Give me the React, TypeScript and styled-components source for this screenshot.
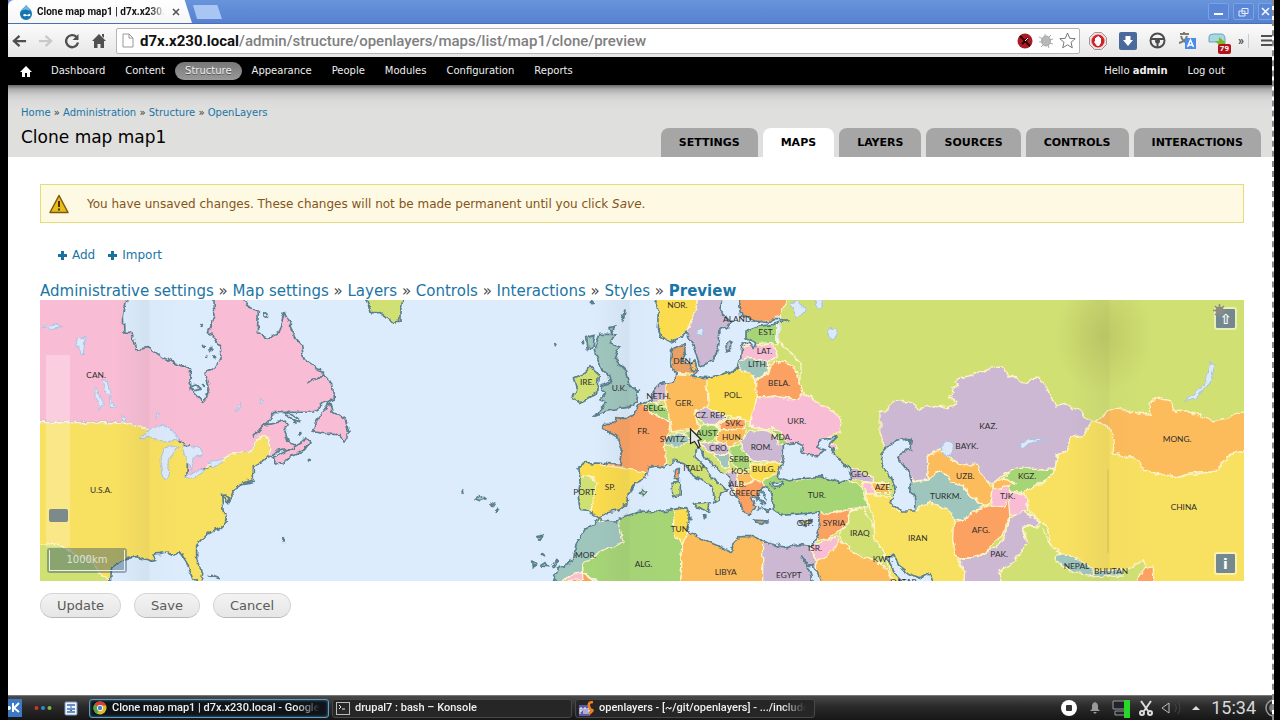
import React from "react";
import styled, { createGlobalStyle } from "styled-components";

const GlobalStyle = createGlobalStyle`
  * { box-sizing: border-box; }
  body { margin: 0; background: #000; font-family: "DejaVu Sans", sans-serif; }
  a { color: #1b75a6; text-decoration: none; }
  button, input { font-family: inherit; }
`;

const Screen = styled.div`
  min-height: 100vh;
  margin: 0 6px 0 8px;
  display: flex;
  flex-direction: column;
  background: #fff;
  border-right: 2px dashed #8a8a8a;
`;

/* Browser window */
const TitleBar = styled.header`
  height: 24px;
  display: flex;
  align-items: flex-end;
  background: linear-gradient(#6794da, #5681d1);
  border-bottom: 1px solid #4a70b4;
`;
const BrowserTab = styled.div`
  width: 184px;
  height: 23px;
  display: flex;
  align-items: center;
  gap: 3px;
  padding: 0 8px 0 10px;
  background: linear-gradient(#fff, #f6f6f6);
  border-radius: 6px 0 0 0;
  clip-path: polygon(0 0, 96% 0, 100% 100%, 0 100%);
`;
const TabTitle = styled.span`
  flex: 1;
  overflow: hidden;
  white-space: nowrap;
  font: 700 10px/16px Roboto, sans-serif;
  color: #111;
  mask-image: linear-gradient(to right, #000 88%, transparent);
`;
const CloseTab = styled.button`
  border: 0;
  padding: 0;
  width: 16px;
  height: 16px;
  background: none;
  color: #555;
  display: grid;
  place-items: center;
`;
const NewTab = styled.button`
  width: 29px;
  height: 14px;
  margin: 0 0 4px 1px;
  padding: 0;
  border: 0;
  background: #a9c5f3;
  clip-path: polygon(0 0, 84% 0, 100% 100%, 14% 100%);
`;
const WindowButtons = styled.div`
  margin-left: auto;
  align-self: center;
  display: flex;
  gap: 4px;
`;
const WindowButton = styled.button`
  width: 21px;
  height: 17px;
  padding: 0;
  display: grid;
  place-items: center;
  border: 1px solid #7ca2e4;
  border-radius: 2px;
  background: #5a86d6;
  &:last-child { width: 14px; border-right: 0; }
`;
const ToolBar = styled.div`
  height: 33px;
  display: flex;
  align-items: center;
  background: linear-gradient(#fbfbfb, #e6e6e6);
`;
const NavTools = styled.div`
  display: flex;
  align-items: center;
  gap: 11px;
  padding: 0 9px 0 4px;
`;
const BarTools = styled.div`
  display: flex;
  align-items: center;
  gap: 5px;
`;
const Extensions = styled.div`
  display: flex;
  align-items: center;
  gap: 12px;
  padding-left: 9px;
`;
const IconButton = styled.button`
  border: 0;
  padding: 0;
  background: none;
  display: grid;
  place-items: center;
  position: relative;
`;
const AddressBar = styled.div`
  flex: 1;
  height: 26px;
  display: flex;
  align-items: center;
  padding: 0 3px 0 5px;
  background: #fff;
  border: 1px solid #b4b4b4;
  border-radius: 2px;
  font: 700 15px/20px Roboto, sans-serif;
`;
const Host = styled.label`
  margin-left: 6px;
  color: #111;
`;
const PathInput = styled.input`
  flex: 1;
  min-width: 0;
  border: 0;
  padding: 0;
  outline: 0;
  background: none;
  color: #808080;
  font: 500 15px/20px Roboto, sans-serif;
`;
const CountBadge = styled.span`
  position: absolute;
  right: -5px;
  bottom: -4px;
  padding: 0 2px;
  background: #b3141c;
  border-radius: 2px;
  color: #fff;
  font: 700 8px/10px Roboto, sans-serif;
`;
const More = styled.span`
  font: 700 12px/14px Roboto, sans-serif;
  color: #444;
  padding-right: 4px;
  border-right: 1px solid #ccc;
`;

/* Drupal admin */
const AdminNav = styled.nav`
  height: 28px;
  display: flex;
  align-items: center;
  padding: 0 47px 0 12px;
  background: #000;
  font-size: 10px;
  line-height: 18px;
  color: #eee;
`;
const NavLink = styled.a<{ $active?: boolean }>`
  padding: 0 10px;
  color: #eee;
  border-radius: 9px;
  background: ${(p) => (p.$active ? "linear-gradient(#777, #999)" : "none")};
  text-shadow: ${(p) => (p.$active ? "0 1px 0 #555" : "none")};
`;
const HomeLink = styled.a`
  display: grid;
  width: 12px;
  margin-right: 9px;
`;
const UserArea = styled.div`
  margin-left: auto;
  display: flex;
  gap: 20px;
`;
const PlainLink = styled.a`
  color: #eee;
`;
const PageHeader = styled.div`
  display: flex;
  justify-content: space-between;
  align-items: flex-end;
  padding: 0 11px 0 13px;
  background: linear-gradient(#6a6868, #aaa 4px, #cdcdcc 10px, #dadada 16px, #dfdfde 24px);
`;
const Heading = styled.div`
  padding: 20px 0 9px;
`;
const Crumbs = styled.nav`
  font-size: 10px;
  line-height: 16px;
  color: #333;
`;
const Title = styled.h1`
  margin: 5px 0 0;
  font-size: 17px;
  line-height: 22px;
  font-weight: 400;
  color: #000;
`;
const Tabs = styled.nav`
  display: flex;
  gap: 5px;
`;
const Tab = styled.a<{ $active?: boolean }>`
  padding: 0 18px;
  font-size: 11px;
  line-height: 29px;
  font-weight: 700;
  color: #000;
  border-radius: 8px 8px 0 0;
  background: ${(p) => (p.$active ? "#fff" : "#a6a6a6")};
`;
const Main = styled.main`
  flex: 1;
  padding: 27px 28px 20px 32px;
`;
const Warning = styled.div`
  display: flex;
  align-items: center;
  gap: 18px;
  height: 39px;
  padding: 0 8px;
  border: 1px solid #e4dc7c;
  background: #fdf9e3;
  color: #84541b;
  font-size: 12px;
  line-height: 16px;
`;
const Actions = styled.div`
  display: flex;
  gap: 13px;
  margin: 24px 0 19px 18px;
  font-size: 12px;
  line-height: 16px;
`;
const ActionLink = styled.a`
  display: flex;
  align-items: center;
  gap: 5px;
`;
const Steps = styled.nav`
  font-size: 15px;
  line-height: 18px;
  color: #444;
`;
const MapView = styled.section`
  position: relative;
  height: 281px;
  overflow: hidden;
  background: #dcecfc;
`;
const MapDrawing = styled.svg`
  display: block;
  width: 100%;
  height: 100%;
`;
const ZoomSlider = styled.input`
  position: absolute;
  left: 6px;
  top: 55px;
  width: 24px;
  height: 192px;
  margin: 0;
  appearance: none;
  writing-mode: vertical-lr;
  background: rgba(255, 255, 255, 0.25);
  &::-webkit-slider-thumb {
    appearance: none;
    width: 19px;
    height: 13px;
    border-radius: 2px;
    background: #7c8a8c;
  }
`;
const ScaleLine = styled.div`
  position: absolute;
  left: 7px;
  bottom: 8px;
  padding: 2px;
  border-radius: 3px;
  background: rgba(40, 80, 110, 0.42);
`;
const ScaleInner = styled.div`
  width: 76px;
  height: 21px;
  border: 1px solid #eee;
  border-top: 0;
  color: #dfe3d4;
  font-size: 10px;
  line-height: 20px;
  text-align: center;
`;
const MapButton = styled.button<{ $bottom?: boolean }>`
  position: absolute;
  right: 7px;
  ${(p) => (p.$bottom ? "bottom: 6px;" : "top: 7px;")}
  width: 23px;
  height: 23px;
  padding: 0;
  border: 2px solid rgba(255, 255, 255, 0.5);
  border-radius: 3px;
  background: #748890;
  background-clip: padding-box;
  color: #fff;
  font: 700 14px/18px "DejaVu Sans", sans-serif;
`;
const MapGear = styled.svg`
  position: absolute;
  right: 18px;
  top: 4px;
`;
const Pointer = styled.svg`
  position: absolute;
  left: 649px;
  top: 128px;
`;
const FormButtons = styled.div`
  display: flex;
  gap: 13px;
  margin-top: 12px;
`;
const PillButton = styled.button`
  height: 25px;
  padding: 0 16px;
  border: 1px solid #d4d4d4;
  border-bottom-color: #b8b8b8;
  border-radius: 13px;
  background: linear-gradient(#f3f3f3, #e6e6e6);
  color: #5a5a5a;
  font-size: 13px;
  line-height: 20px;
`;

/* Desktop panel */
const Panel = styled.footer`
  height: 25px;
  display: flex;
  align-items: center;
  border-top: 1px solid #777;
  background: linear-gradient(#4a4a4a, #2c2c2c 40%, #161616);
  color: #e8e8e8;
`;
const Launchers = styled.div`
  display: flex;
  align-items: center;
  gap: 12px;
  width: 81px;
`;
const TaskButton = styled.button<{ $active?: boolean }>`
  flex: 0 1 240px;
  min-width: 0;
  height: 19px;
  margin-right: 3px;
  display: flex;
  align-items: center;
  gap: 5px;
  padding: 0 8px 0 3px;
  border: 1px solid ${(p) => (p.$active ? "#5b9fc8" : "#484848")};
  border-radius: 3px;
  background: ${(p) => (p.$active ? "#101418" : "#262626")};
  box-shadow: ${(p) => (p.$active ? "inset 0 0 3px #3f84ac" : "none")};
  color: #f0f0f0;
  text-align: left;
`;
const TaskTitle = styled.span`
  flex: 1;
  overflow: hidden;
  white-space: nowrap;
  font: 500 11px/16px Roboto, sans-serif;
  mask-image: linear-gradient(to right, #000 88%, transparent);
`;
const Tray = styled.div`
  margin-left: auto;
  display: flex;
  align-items: center;
  gap: 8px;
`;
const Clock = styled.time`
  font: 400 18px/22px Roboto, sans-serif;
  color: #d8d8d8;
`;

const navItems = ["Dashboard", "Content", "Structure", "Appearance", "People", "Modules", "Configuration", "Reports"];
const tabs = ["SETTINGS", "MAPS", "LAYERS", "SOURCES", "CONTROLS", "INTERACTIONS"];
const crumbs = ["Home", "Administration", "Structure", "OpenLayers"];
const steps = ["Administrative settings", "Map settings", "Layers", "Controls", "Interactions", "Styles", "Preview"];

const C = {
  sea: "#dcecfc", coast: "#5a7f8e", border: "#fff3c8",
  lime: "#d0e073", green: "#a6d576", yellow: "#f8e060", gold: "#fbdc4e",
  orange: "#fdbc5c", deep: "#fba263", purple: "#ccb8d2", pink: "#f8bdd4", teal: "#9fc6bd",
};

type Shape = [string, string];

/* Asia, drawn in its own frame starting at x = 2460 */
const asia: Shape[] = [
  [C.purple, "60,350 80,342 85,325 110,315 135,318 150,315 180,338 215,328 240,335 285,328 290,318 270,305 282,290 278,275 295,268 282,255 295,248 370,228 395,215 430,213 445,230 443,243 465,240 485,260 505,262 515,250 535,243 560,275 580,315 587,330 610,322 640,335 660,340 672,360 695,372 680,395 670,418 630,425 622,465 592,475 585,520 500,517 440,528 400,560 360,550 300,505 240,462 202,478 205,552 160,555 80,470 60,410"],
  [C.yellow, "700,372 745,395 762,432 760,470 840,490 850,520 950,545 1060,525 1080,515 1095,480 1152,465 1200,460 1200,880 860,880 800,850 700,840 600,780 575,755 560,690 510,650 500,600 490,590 550,560 585,522 592,475 622,465 630,425 670,418"],
  [C.orange, "710,375 735,350 780,335 810,348 872,355 870,320 885,305 935,315 940,345 1000,350 1060,375 1110,365 1130,350 1200,345 1200,462 1152,465 1110,475 1100,490 1080,500 1075,522 1000,530 950,545 850,522 840,495 760,470 762,432 745,395"],
  [C.lime, "430,890 420,830 500,740 490,690 540,690 575,750 620,790 700,830 800,822 850,790 880,890"],
  [C.yellow, "15,590 50,600 90,600 110,645 170,642 210,615 250,630 280,650 285,680 278,730 290,785 312,830 300,890 100,890 80,790 40,720 40,660 20,620"],
  [C.teal, "150,560 175,555 205,552 225,530 245,525 268,545 280,560 310,570 335,605 372,630 345,640 310,675 285,668 260,640 210,618 170,642 150,600"],
  [C.orange, "202,478 240,462 270,490 300,505 355,508 365,540 385,560 400,575 395,610 380,632 335,605 310,570 270,560 262,538 240,525 225,530 205,552"],
  [C.green, "440,535 460,520 500,515 585,522 560,550 520,570 490,590 455,585 440,575 462,562 430,548"],
  [C.orange, "400,560 430,548 462,562 440,575 400,578"],
  [C.pink, "400,580 440,572 455,588 490,595 500,610 503,640 470,655 450,650 440,625 390,635"],
  [C.deep, "280,680 310,675 340,645 390,632 430,628 445,612 450,660 425,720 400,740 380,770 340,785 290,785 278,730"],
  [C.purple, "297,788 350,785 380,770 425,740 450,665 490,645 540,678 520,690 488,690 500,740 460,800 420,825 430,890 300,890 315,830"],
  [C.teal, "590,778 615,772 660,795 700,820 700,840 640,830 588,797"],
  [C.teal, "705,825 790,822 790,840 705,842"],
  [C.deep, "830,855 850,820 880,812 882,890 830,890"],
];

/* Europe and North Africa, drawn in a frame starting at x = 1800 */
const europe: Shape[] = [
  [C.lime, "-250,300 100,250 330,140 410,130 480,200 480,620 -20,620 -250,580"],
  [C.green, "-80,640 100,640 105,700 125,750 118,890 -60,890 -172,830 -172,800 -90,755 -50,740"],
  [C.teal, "-300,890 -240,640 -110,640 -65,670 -50,740 -90,755 -172,800 -172,830 -250,860"],
  [C.pink, "-230,855 -210,835 -172,830 -172,890 -240,890"],
  [C.deep, "-230,855 -172,850 -172,832 -90,890 -240,890"],
  [C.gold, "-210,480 -60,510 25,530 20,560 -30,640 -110,680 -150,665 -145,600 -135,545 -210,545"],
  [C.lime, "-210,545 -150,542 -132,560 -140,610 -148,650 -210,660"],
  [C.deep, "-130,350 -10,325 20,325 50,358 90,378 88,400 75,440 80,500 60,530 20,530 -60,515 -130,505"],
  [C.gold, "40,-10 172,-10 160,70 140,105 90,145 30,120"],
  [C.purple, "172,-10 250,-10 285,70 240,210 170,215 140,110 160,70"],
  [C.deep, "300,-10 450,-10 425,50 400,75 330,80 295,60"],
  [C.green, "310,80 410,80 410,140 345,142 310,130"],
  [C.pink, "295,155 345,140 365,150 395,138 413,180 390,195 340,185 300,190"],
  [C.teal, "300,190 340,185 385,195 385,225 350,250 320,235 300,225"],
  [C.deep, "350,255 385,228 388,208 410,195 460,205 470,240 490,290 468,312 400,300 350,305"],
  [C.gold, "190,250 290,215 345,245 352,300 345,330 330,375 280,365 250,355 205,335 200,280"],
  [C.orange, "75,270 100,235 200,245 205,335 165,355 180,400 95,405 90,375 78,340"],
  ["#e9a062", "85,150 150,140 180,235 100,228"],
  [C.purple, "30,270 78,258 78,310 50,320 20,325"],
  [C.green, "10,330 40,315 85,340 88,375 50,358"],
  [C.teal, "75,425 110,410 147,415 150,440 100,452 75,445"],
  [C.green, "130,412 175,402 190,385 237,390 232,425 200,438 145,430"],
  [C.purple, "165,350 200,332 260,362 235,385 190,385"],
  [C.deep, "240,380 280,368 320,375 312,398 240,402"],
  [C.orange, "235,405 318,397 310,430 265,450 232,430"],
  [C.pink, "350,308 400,300 465,312 485,298 510,295 525,320 560,330 605,370 600,405 560,425 590,460 500,490 420,455 410,400 380,402 330,390 332,370"],
  [C.purple, "305,440 330,405 370,402 395,410 420,445 445,460 420,500 340,495 310,470"],
  [C.green, "395,395 420,405 442,440 420,448"],
  [C.purple, "180,440 260,440 265,472 225,475 200,465"],
  [C.teal, "220,475 270,475 268,520 245,510"],
  [C.green, "270,450 300,450 330,490 330,520 290,518 275,490"],
  [C.gold, "332,505 430,500 415,540 345,560 325,530"],
  [C.orange, "290,535 325,530 340,555 300,565"],
  [C.purple, "255,530 290,525 298,590 260,590"],
  [C.deep, "285,575 350,555 400,552 400,600 370,680 300,670"],
  [C.green, "370,545 420,535 450,555 540,540 620,550 665,570 682,635 600,645 540,660 380,670"],
  [C.purple, "610,515 650,520 700,545 695,560 640,550"],
  [C.pink, "668,560 700,560 710,595 680,590"],
  [C.orange, "690,560 745,560 750,590 710,590"],
  [C.gold, "98,630 160,630 150,715 125,750 98,700"],
  [C.orange, "118,890 125,750 150,690 370,700 368,890"],
  [C.purple, "368,700 500,740 530,750 540,890 368,890"],
  [C.orange, "525,890 530,795 560,770 600,728 650,775 720,800 790,890"],
  [C.pink, "510,750 545,740 590,722 592,745 550,790 525,795"],
  [C.deep, "530,650 580,652 630,640 625,680 565,728 530,735"],
  [C.lime, "630,645 672,637 700,690 700,720 740,790 720,800 650,775 600,728 600,700 628,680"],
];

const europeSea: string[] = [
  "-270,890 -245,815 -200,795 -192,745 -165,700 -135,685 -125,665 -150,645 -180,640 -185,600 -180,560 -183,515 -160,500 -60,505 -50,460 -65,425 -115,395 -105,382 -75,382 -72,365 -40,368 -15,355 -8,330 30,315 45,280 60,265 100,258 108,235 92,200 95,160 135,142 138,170 128,190 140,205 165,200 172,225 150,240 200,245 225,240 265,230 295,215 302,180 305,150 325,138 345,160 350,140 318,125 318,105 350,92 400,85 445,72 395,70 385,80 345,75 305,60 295,-10 245,-10 243,50 275,80 258,95 240,100 236,150 218,195 178,210 168,170 150,130 142,105 120,125 90,138 65,125 52,95 55,50 42,-10 -2000,-10 -2000,890",
  "-125,662 -105,648 -65,642 -40,622 -35,595 -10,560 18,545 25,515 50,510 75,515 105,490 130,500 150,530 185,555 215,570 222,600 218,622 235,612 240,590 262,582 245,565 215,545 192,510 165,482 165,462 180,458 195,485 235,520 268,545 278,590 300,615 308,645 332,655 345,630 330,605 355,600 368,570 385,575 395,600 400,640 425,658 500,652 538,648 540,680 530,720 515,752 480,745 440,755 385,742 345,722 300,722 278,745 275,768 240,752 200,735 150,712 140,690 148,655 140,635 100,640 50,648 0,645 -50,662 -75,678 -115,675",
  "430,445 470,440 490,450 485,470 515,480 535,478 555,460 530,450 550,430 592,422 565,450 590,480 630,520 635,545 600,560 540,542 490,545 450,555 415,545 420,515 430,485",
  "400,560 425,560 430,568 408,572",
  "485,780 510,812 520,800 522,815 530,825 555,890 525,890 508,825",
  "770,435 810,428 815,460 785,465 775,490 800,520 815,555 812,590 827,600 827,645 790,645 750,620 768,590 755,545 725,510 720,475 738,455",
  "738,780 765,778 775,810 810,835 840,845 870,830 885,890 820,890 770,840",
];

const islands: Shape[] = [
  [C.teal, "-120,115 -75,115 -90,140 -60,150 -75,190 -40,225 -30,270 -5,282 -10,320 -40,335 -95,342 -135,358 -100,320 -120,310 -105,290 -120,270 -85,260 -90,240 -110,230 -130,180 -135,150"],
  [C.lime, "-150,212 -125,235 -130,290 -180,320 -202,308 -190,280 -200,245 -175,235"],
  [C.teal, "-160,125 -135,118 -140,145 -155,165"],
  [C.teal, "-90,95 -72,90 -85,112"],
  [C.teal, "-55,60 -45,42 -50,75"],
  [C.deep, "103,525 118,520 115,552 104,545"],
  [C.lime, "97,560 118,555 118,600 98,602"],
  [C.lime, "160,622 210,618 205,648 170,635"],
  [C.deep, "340,672 388,675 365,685"],
  [C.orange, "475,675 515,670 495,692"],
  [C.purple, "255,150 270,135 275,150 258,168"],
  [C.lime, "0,590 12,578 20,588 8,598"],
  [C.lime, "-825,-10 -810,50 -780,50 -740,80 -720,75 -720,45 -705,-10"],
  [C.orange, "150,205 165,195 170,220 155,225"],
  [C.teal, "345,600 355,610 348,615"], [C.teal, "365,615 378,620 370,628"], [C.teal, "372,640 392,638 384,652"], [C.teal, "355,630 362,640 352,642"],
  [C.teal, "-535,590 -530,580 -528,592"], [C.teal, "-495,608 -480,598 -465,608 -480,614"], [C.teal, "-450,622 -435,628 -445,632"], [C.teal, "-310,722 -290,718 -300,730"],
  [C.teal, "-322,795 -312,800 -320,818"], [C.teal, "-300,810 -285,800 -278,812"], [C.teal, "-265,812 -250,790 -248,800 -258,815"],
];

const america: Shape[] = [
  [C.pink, "-20,-10 265,-10 250,60 252,108 275,110 290,160 325,155 370,185 420,208 452,217 450,255 455,285 470,300 488,320 500,300 508,275 495,228 525,215 540,190 538,150 515,118 505,110 525,60 520,-10 600,-10 630,35 655,45 652,110 685,125 715,110 733,50 770,130 785,145 790,185 830,218 850,225 850,240 878,265 880,310 850,322 820,348 700,350 690,370 640,420 670,388 735,375 742,385 733,400 745,440 785,452 745,460 715,465 695,480 500,560 -20,500"],
  [C.pink, "868,320 878,350 895,355 920,375 930,410 915,435 890,412 845,412 818,405 828,375"],
  [C.pink, "700,485 745,462 785,440 795,425 810,440 795,460 750,480 725,505 708,500"],
  [C.yellow, "-20,380 250,380 330,402 405,430 445,450 440,545 500,515 550,492 575,475 635,467 650,430 668,418 683,425 692,478 640,512 640,550 590,570 575,600 562,620 545,595 550,650 562,675 540,695 500,715 470,745 470,790 488,830 482,870 460,850 440,800 420,770 395,778 385,768 340,775 350,790 330,795 290,782 250,790 215,815 208,890 -20,890"],
];
const lakes = [
  "300,425 345,388 390,392 415,435 380,440 345,425", "365,540 360,490 375,455 415,450 388,490 385,540 375,548",
  "425,450 480,455 490,478 460,480 455,520 440,500", "435,545 460,528 500,520 480,535 450,550", "500,502 545,490 550,500 520,512",
  "185,250 205,255 215,305 195,290", "110,125 135,125 130,180 115,160", "0,100 35,85 70,92 30,98", "165,270 190,320 180,340 165,300", "210,305 230,335 215,338",
  "585,345 605,318 600,335", "240,360 260,370 250,380", "660,310 675,315 665,328", "345,348 358,352 350,370",
  "2252,25 2268,15 2300,40 2270,70", "2325,12 2345,12 2350,30 2335,42", "2362,100 2385,95 2392,120 2375,132",
  "1968,100 1985,92 1988,115 1970,120", "2942,460 2946,442 2970,430 3030,432 2975,440 2950,455", "3435,312 3490,270 3510,200 3525,205 3510,260 3465,310",
  "2700,450 2720,435 2740,440 2738,475 2715,485",
];
const specks = [[490, 150], [513, 158], [524, 182], [500, 180], [490, 268], [780, 415], [808, 496], [731, 733], [515, 838], [485, 85], [1628, 140], [1548, 146], [1510, 776], [1657, 20], [1370, 643], [1950, 665], [1995, 662]];

const labels: [string, number, number][] = [
  ["CAN.", 139, 246], ["U.S.A.", 150, 590], ["IRE.", 1620, 267], ["U.K.", 1715, 284], ["NETH.", 1819, 308], ["BELG.", 1809, 345],
  ["FR.", 1792, 414], ["SP.", 1694, 581], ["PORT.", 1600, 596], ["MOR.", 1605, 787], ["ALG.", 1784, 814], ["NOR.", 1882, 37],
  ["ALAND.", 2049, 77], ["EST.", 2155, 118], ["LAT.", 2150, 174], ["LITH.", 2124, 213], ["DEN.", 1900, 205], ["BELA.", 2184, 270],
  ["POL.", 2052, 306], ["GER.", 1906, 331], ["CZ. REP.", 1966, 367], ["SVK.", 2056, 390], ["UKR.", 2242, 385], ["AUST.", 1968, 421],
  ["HUN.", 2046, 433], ["MDA.", 2192, 433], ["SWITZ.", 1859, 438], ["CRO.", 2008, 464], ["ROM.", 2132, 463], ["SERB.", 2068, 497],
  ["ITALY", 1930, 526], ["KOS.", 2074, 533], ["BULG.", 2136, 529], ["ALB.", 2066, 574], ["GREECE", 2068, 601], ["TUR.", 2303, 607],
  ["GEO.", 2432, 543], ["TUN.", 1892, 708], ["CYP.", 2270, 690], ["SYRIA", 2348, 690], ["IRAQ", 2430, 720], ["ISR.", 2304, 765],
  ["LIBYA", 2024, 837], ["EGYPT", 2208, 846], ["KAZ.", 2818, 400], ["BAYK.", 2746, 459], ["UZB.", 2748, 550], ["KGZ.", 2934, 549],
  ["AZE.", 2504, 582], ["TURKM.", 2670, 609], ["TJK.", 2880, 609], ["IRAN", 2604, 735], ["AFG.", 2795, 711], ["PAK.", 2851, 782],
  ["KWT.", 2498, 797], ["QATAR", 2550, 866], ["NEPAL", 3071, 820], ["BHUTAN", 3162, 835], ["MONG.", 3368, 438], ["CHINA", 3392, 641],
];

const PoliticalMap = () => (
  <MapDrawing viewBox="0 12 3612 843" preserveAspectRatio="xMinYMin slice" role="img" aria-label="World map preview">
    <defs>
      <filter id="rough" x="0" y="0" width="3612" height="880" filterUnits="userSpaceOnUse" colorInterpolationFilters="sRGB">
        <feTurbulence type="fractalNoise" baseFrequency="0.045" numOctaves="3" seed="4" />
        <feDisplacementMap in="SourceGraphic" scale="18" xChannelSelector="R" yChannelSelector="G" />
      </filter>
      <linearGradient id="fold">
        <stop offset="0" stopColor="#555" stopOpacity="0" />
        <stop offset=".5" stopColor="#555" stopOpacity=".07" />
        <stop offset=".53" stopColor="#555" stopOpacity=".02" />
        <stop offset="1" stopColor="#555" stopOpacity="0" />
      </linearGradient>
      <radialGradient id="stain">
        <stop offset="0" stopColor="#807a30" stopOpacity=".2" />
        <stop offset="1" stopColor="#807a30" stopOpacity="0" />
      </radialGradient>
    </defs>
    <g filter="url(#rough)" strokeLinejoin="round">
      <path d="M2230 -10H3700V890H2330V620L2180 560Z" fill={C.lime} />
      <g stroke={C.border} strokeWidth="4">
        <g transform="translate(2460 0)">{asia.map(([f, p]) => <polygon key={p} points={p} fill={f} />)}</g>
        <g transform="translate(1800 0)">{europe.map(([f, p]) => <polygon key={p} points={p} fill={f} />)}</g>
      </g>
      <g stroke={C.coast} strokeWidth="5">
        <g transform="translate(1800 0)">
          {europeSea.map((p) => <polygon key={p} points={p} fill={C.sea} />)}
          {islands.map(([f, p]) => <polygon key={p} points={p} fill={f} />)}
        </g>
        {america.map(([f, p]) => <polygon key={p} points={p} fill={f} />)}
        {specks.map(([x, y]) => <circle key={`${x}-${y}`} cx={x} cy={y} r="3" fill={C.coast} />)}
        <path d="M805 262Q830 240 855 242M735 350Q770 358 782 378Q745 372 735 350M455 272Q475 260 480 280Q460 290 455 272M672 50Q684 50 682 66Q670 70 672 50M545 600Q570 590 560 620M500 835L540 845M645 555L590 568" fill="none" />
      </g>
      <polygon points="-20,750 40,745 80,755 110,780 150,790 175,830 208,850 208,890 -20,890" fill={C.lime} stroke={C.border} strokeWidth="4" />
      <path d="M-20 380H250L330 402L400 425M500 512L550 492L575 475L635 467L650 430L668 418L683 425L692 475" fill="none" stroke={C.border} strokeWidth="6" />
      <g fill="#dbe9fa" stroke="#a9c4e4" strokeWidth="3">{lakes.map((p) => <polygon key={p} points={p} />)}</g>
      <path d="M2190 560l15 20M2160 580l20 30M2150 600l10 20M2165 635l25 15" stroke={C.coast} strokeWidth="4" />
    </g>
    <rect x="225" y="0" width="200" height="870" fill="url(#fold)" />
    <rect x="1665" y="0" width="200" height="870" fill="url(#fold)" />
    <rect x="3085" y="0" width="240" height="870" fill="url(#fold)" />
    <ellipse cx="3190" cy="120" rx="150" ry="170" fill="url(#stain)" />
    <path d="M3204 520V770" stroke="#a89a48" strokeWidth="2" opacity=".6" />
    <g fontFamily="Lato, sans-serif" fontSize="25" fill="#2e2e2e">
      {labels.map(([t, x, y]) => <text key={t} x={x} y={y}>{t}</text>)}
    </g>
  </MapDrawing>
);

const Arrow = ({ flip, color }: { flip?: boolean; color: string }) => (
  <svg width="15" height="14" viewBox="0 0 16 14" fill="none" stroke={color} strokeWidth="2.4">
    <path d={flip ? "M1 7h12M8 1.500l6 5.500-6 5.500" : "M15 7H3M8 1.500L2 7l6 5.500"} />
  </svg>
);

const joined = (items: string[], last?: string) =>
  items.map((t, i) => (
    <React.Fragment key={t}>
      {i > 0 && " » "}
      <a href="#">{t === last ? <b>{t}</b> : t}</a>
    </React.Fragment>
  ));

export default function App() {
  return (
    <Screen>
      <GlobalStyle />
      <TitleBar>
        <BrowserTab>
          <svg width="16" height="16" viewBox="0 0 16 16">
            <path d="M8 1C9 3 14 5 14 10a6 6 0 0 1-12 0C2 5 7 4 8 1Z" fill="#1477b4" />
            <path d="M3 7C4 5 8 3 8 1c1 2 4 4 4 6-3-2-6-2-9 0Z" fill="#6fb9e4" />
            <path d="M5 11c2-2 3 0 4 0s2-2 3-1 0 3-2 2-3 2-5-1Z" fill="#fff" />
          </svg>
          <TabTitle>Clone map map1 | d7x.x230.local</TabTitle>
          <CloseTab aria-label="Close tab">
            <svg width="8" height="8" viewBox="0 0 8 8" stroke="currentColor" strokeWidth="1.600"><path d="M1 1l6 6M7 1L1 7" /></svg>
          </CloseTab>
        </BrowserTab>
        <NewTab aria-label="New tab" />
        <WindowButtons>
          <WindowButton aria-label="Minimize"><svg width="11" height="10"><path d="M1 7h9" stroke="#fff" strokeWidth="2" /></svg></WindowButton>
          <WindowButton aria-label="Restore"><svg width="11" height="10" fill="none" stroke="#e4eeff"><path d="M4 1.500h6v5H4zM1 4h6v5H1z" /></svg></WindowButton>
          <WindowButton aria-label="Close window"><svg width="9" height="9" stroke="#fff" strokeWidth="1.500"><path d="M1 1l7 7M8 1L1 8" /></svg></WindowButton>
        </WindowButtons>
      </TitleBar>
      <ToolBar>
        <NavTools>
          <IconButton aria-label="Back"><Arrow color="#4e4e4e" /></IconButton>
          <IconButton aria-label="Forward"><Arrow flip color="#c9c9c9" /></IconButton>
          <IconButton aria-label="Reload">
            <svg width="16" height="16" viewBox="0 0 16 16" fill="none" stroke="#505050" strokeWidth="2.400"><path d="M12.500 4A6 6 0 1 0 14 9.500" /><path d="M14.500 1v6H8.500z" fill="#505050" stroke="none" /></svg>
          </IconButton>
          <IconButton aria-label="Home">
            <svg width="16" height="16" viewBox="0 0 16 16" fill="#505050"><path d="M8 1l7 7h-2v7H9.500v-4h-3v4H3V8H1zM11 1h2v4l-2-2z" /></svg>
          </IconButton>
        </NavTools>
        <AddressBar>
          <svg width="12" height="15" viewBox="0 0 12 15" fill="#fff" stroke="#999"><path d="M1 1h6l4 4v9H1zM7 1v4h4" /></svg>
          <Host htmlFor="address">d7x.x230.local</Host>
          <PathInput id="address" defaultValue="/admin/structure/openlayers/maps/list/map1/clone/preview" />
          <BarTools>
            <svg width="16" height="16" viewBox="0 0 16 16"><circle cx="8" cy="8" r="7.500" fill="#a81c26" /><path d="M3 3l10 10M11 5L5 11" stroke="#300" strokeWidth="2" /><path d="M11 5l-3 3" stroke="#fff" /></svg>
            <svg width="16" height="16" viewBox="0 0 16 16" stroke="#aaa"><ellipse cx="8" cy="8" rx="4.500" ry="5" fill="#b8b8b8" /><path d="M1 4l4 2M1 9h4M3 14l3-3M13 2l-3 3M15 6l-4 1M15 11l-4-1M11 15l-1-4M7 1v3" /></svg>
            <svg width="17" height="17" viewBox="0 0 17 17" fill="#fff" stroke="#777"><path d="M8.500 1l2.200 5.300 5.500.4-4.200 3.600 1.300 5.500-4.800-3-4.800 3L5 10.300.8 6.700l5.500-.4z" /></svg>
          </BarTools>
        </AddressBar>
        <Extensions>
          <IconButton aria-label="Ad blocker">
            <svg width="18" height="18" viewBox="0 0 18 18"><path d="M5.500.5h7l5 5v7l-5 5h-7l-5-5v-7z" fill="#f4dada" stroke="#999" /><circle cx="9" cy="9" r="6.500" fill="#cf2228" /><path d="M6 9V6h1.200V5h1.300V4h1.300v1H11v1h1v5l-2 3H8L5 10z" fill="#fff" /></svg>
          </IconButton>
          <IconButton aria-label="Downloads">
            <svg width="18" height="18" viewBox="0 0 18 18"><rect width="18" height="18" rx="2" fill="#4b6a9c" /><path d="M6.500 4h5v4H14l-5 6-5-6h2.500z" fill="#fff" /></svg>
          </IconButton>
          <IconButton aria-label="Steering">
            <svg width="17" height="17" viewBox="0 0 17 17" fill="none" stroke="#4c4c4c" strokeWidth="2"><circle cx="8.500" cy="8.500" r="7" /><path d="M2 7h13M8.500 9v6" /><circle cx="8.500" cy="9" r="1.500" fill="#444" /></svg>
          </IconButton>
          <IconButton aria-label="Translate">
            <svg width="18" height="18" viewBox="0 0 18 18"><path d="M2 2h9M6 0v3M3 4c1 4 4 6 6 7M9 4C8 8 5 10 1 11" stroke="#7c7c6c" strokeWidth="2" fill="none" /><rect x="7" y="6" width="11" height="11" fill="#4a8ce8" /><path d="M9.500 15l3-7 3 7M10.500 13h4" stroke="#fff" strokeWidth="1.500" fill="none" /></svg>
          </IconButton>
          <IconButton aria-label="Extension, 79 items">
            <svg width="18" height="18" viewBox="0 0 18 18"><path d="M1 9V5q0-3 4-3h8q4 0 4 5v3H1z" fill="#a8d6e4" stroke="#6aa6b8" /><path d="M7 9h4V5l7 6-5 4z" fill="#79b928" /></svg>
            <CountBadge>79</CountBadge>
          </IconButton>
          <More>»</More>
          <IconButton aria-label="Menu"><svg width="11" height="13"><path d="M0 2h11M0 6.500h11M0 11h11" stroke="#505050" strokeWidth="2" /></svg></IconButton>
        </Extensions>
      </ToolBar>
      <AdminNav>
        <HomeLink href="#" aria-label="Home"><svg width="12" height="11" viewBox="0 0 12 11" fill="#fff"><path d="M6 0l6 6h-2v5H7V7H5v4H2V6H0z" /></svg></HomeLink>
        {navItems.map((t) => <NavLink key={t} href="#" $active={t === "Structure"}>{t}</NavLink>)}
        <UserArea>
          <span>Hello <b>admin</b></span>
          <PlainLink href="#">Log out</PlainLink>
        </UserArea>
      </AdminNav>
      <PageHeader>
        <Heading>
          <Crumbs>{joined(crumbs)}</Crumbs>
          <Title>Clone map map1</Title>
        </Heading>
        <Tabs>{tabs.map((t) => <Tab key={t} href="#" $active={t === "MAPS"}>{t}</Tab>)}</Tabs>
      </PageHeader>
      <Main>
        <Warning>
          <svg width="20" height="20" viewBox="0 0 20 20"><path d="M10 1.500L19 18.500H1z" fill="#e8bd17" stroke="#7a5a10" strokeWidth="1.500" strokeLinejoin="round" /><path d="M10 7v6M10 14.500v2" stroke="#4a3000" strokeWidth="2" /></svg>
          <span>You have unsaved changes. These changes will not be made permanent until you click <i>Save</i>.</span>
        </Warning>
        <Actions>
          {["Add", "Import"].map((t) => (
            <ActionLink key={t} href="#">
              <svg width="9" height="9"><path d="M4.500 0v9M0 4.500h9" stroke="#1a719f" strokeWidth="3" /></svg>{t}
            </ActionLink>
          ))}
        </Actions>
        <Steps>{joined(steps, "Preview")}</Steps>
        <MapView>
          <PoliticalMap />
          <ZoomSlider type="range" aria-label="Zoom" min={0} max={100} defaultValue={86} />
          <ScaleLine><ScaleInner>1000km</ScaleInner></ScaleLine>
          <MapButton aria-label="Full screen">⇧</MapButton>
          <MapGear width="13" height="13" viewBox="0 0 13 13"><circle cx="6.500" cy="6.500" r="4" fill="#8c8c84" /><path d="M6.500 0v13M0 6.500h13M2 2l9 9M11 2l-9 9" stroke="#8c8c84" strokeWidth="1.500" /></MapGear>
          <MapButton $bottom aria-label="Attribution">i</MapButton>
          <Pointer width="14" height="21" viewBox="0 0 14 21"><path d="M1.500 1v14.500l4-2 4 6 1.500-1-2-6 3-1z" fill="#e8e8e8" stroke="#222" strokeWidth="1.200" /></Pointer>
        </MapView>
        <FormButtons>
          <PillButton>Update</PillButton>
          <PillButton>Save</PillButton>
          <PillButton>Cancel</PillButton>
        </FormButtons>
      </Main>
      <Panel>
        <Launchers>
          <svg width="14" height="18" viewBox="0 0 14 18"><rect width="14" height="18" fill="#3c78c4" /><path d="M5 4v9M11 4L6 9l5 4" stroke="#fff" strokeWidth="2" fill="none" /><circle cx="1" cy="9" r="2" fill="#fff" /></svg>
          <svg width="18" height="6"><circle cx="2.500" cy="3" r="2" fill="#c33" /><circle cx="9" cy="3" r="2" fill="#38c" /><circle cx="15.500" cy="3" r="2" fill="#7b4" /></svg>
          <svg width="14" height="15" viewBox="0 0 14 15"><rect x="1" y="1" width="12" height="13" rx="1" fill="#eef3fa" stroke="#7c98c0" /><path d="M3 4h8M3 8h8M3 11h8" stroke="#3c6cb0" strokeWidth="1.500" /><path d="M6 6h2M6 9.500h2" stroke="#3c6cb0" /></svg>
        </Launchers>
        <TaskButton $active>
          <svg width="14" height="14" viewBox="0 0 14 14"><circle cx="7" cy="7" r="6.500" fill="#e0b92c" /><path d="M7 7L1.400 3.800A6.500 6.500 0 0 1 13 4.500H7z" fill="#d8412f" /><path d="M7 7L4 13A6.500 6.500 0 0 1 1.400 3.800z" fill="#4ca64c" /><circle cx="7" cy="7" r="3" fill="#fff" /><circle cx="7" cy="7" r="2.200" fill="#4a80d0" /></svg>
          <TaskTitle>Clone map map1 | d7x.x230.local - Google Chrome</TaskTitle>
        </TaskButton>
        <TaskButton>
          <svg width="14" height="13" viewBox="0 0 14 13"><rect x=".5" y=".5" width="13" height="12" fill="#282828" stroke="#bbb" /><path d="M3 3l2 2-2 2M6 7h3" stroke="#eee" fill="none" /></svg>
          <TaskTitle>drupal7 : bash – Konsole</TaskTitle>
        </TaskButton>
        <TaskButton>
          <svg width="15" height="15" viewBox="0 0 15 15"><rect y="4" width="11" height="11" fill="#5a5aa8" /><path d="M1 13V7h2v3H1M5 13V7h2v6M9 13V7h2v3H9" stroke="#fff" fill="none" /><path d="M14 1Q9 1 10 5t3 4-3 4" stroke="#f08020" strokeWidth="2.500" fill="none" /></svg>
          <TaskTitle>openlayers - [~/git/openlayers] - .../includes/</TaskTitle>
        </TaskButton>
        <Tray>
          <svg width="18" height="18" viewBox="0 0 18 18"><circle cx="9" cy="9" r="8" fill="#fff" /><rect x="6" y="6" width="6" height="6" fill="#333" rx="1" /></svg>
          <svg width="18" height="14" viewBox="0 0 18 14" fill="#999"><path d="M4 10l2-2V5q0-3 3-4 3 1 3 4v3l2 2zM7 11h4l-2 2z" /></svg>
          <svg width="19" height="19" viewBox="0 0 19 19"><path d="M1 2h14v8H1zM3 12h10v4H3z" fill="#20242c" stroke="#999" /><rect x="12" y="1" width="6" height="18" fill="#28d828" /></svg>
          <svg width="14" height="16" viewBox="0 0 14 16" fill="none" stroke="#ddd" strokeWidth="2"><path d="M2 1l7 10M12 1L5 11" /><circle cx="3" cy="13" r="2" /><circle cx="11" cy="13" r="2" /></svg>
          <svg width="20" height="14" viewBox="0 0 20 14" fill="none" stroke="#bbb"><path d="M1 7l7-5v10z" /><path d="M14 3q3 4 0 8M17 1q4 6 0 12" stroke="#444" /></svg>
          <svg width="14" height="6" viewBox="0 0 14 6" fill="#ddd"><path d="M7 1l4 4H3z" /></svg>
          <Clock>15:34</Clock>
          <svg width="8" height="18" viewBox="0 0 8 18"><circle cx="10" cy="9" r="8" fill="none" stroke="#999" strokeWidth="1.500" /><circle cx="10" cy="9" r="5" fill="#777" /></svg>
        </Tray>
      </Panel>
    </Screen>
  );
}
